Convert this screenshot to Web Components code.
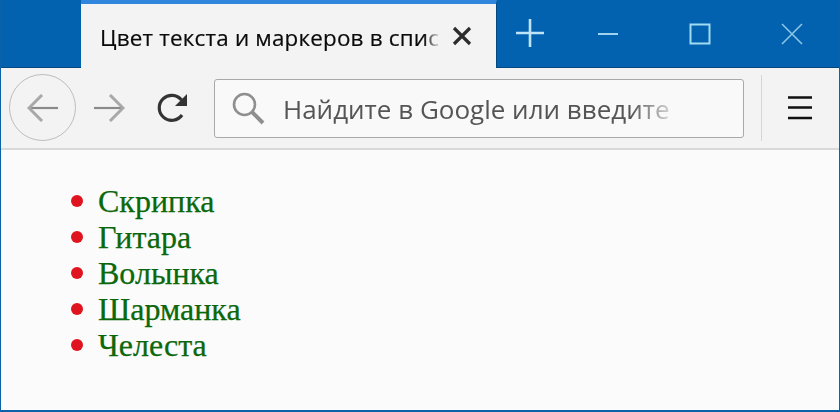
<!DOCTYPE html>
<html lang="ru">
<head>
<meta charset="utf-8">
<title>Цвет текста и маркеров в списке</title>
<style>
    html, body { margin: 0; padding: 0; background: #fbfbfb; }
</style>
</head>
<body>
<browser-window>
    <tab-strip slot="tabs" title="Цвет текста и маркеров в спис"></tab-strip>
    <nav-toolbar slot="toolbar" placeholder="Найдите в Google или введите"></nav-toolbar>
    <color-list>
        <li>Скрипка</li>
        <li>Гитара</li>
        <li>Волынка</li>
        <li>Шарманка</li>
        <li>Челеста</li>
    </color-list>
</browser-window>

<script>
class BrowserWindow extends HTMLElement {
    constructor() {
        super();
        const shadowRoot = this.attachShadow({ mode: 'open' });
        shadowRoot.innerHTML = `
            <style>
                :host {
                    display: flex;
                    flex-direction: column;
                    width: 840px;
                    height: 412px;
                    box-sizing: border-box;
                    overflow: hidden;
                    background: #fbfbfb;
                    border-left: 1px solid #0b62a8;
                    border-right: 1px solid #0b62a8;
                    border-bottom: 2px solid #0b62a8;
                }
                .content { flex: 1; min-height: 0; }
            </style>
            <slot name="tabs"></slot>
            <slot name="toolbar"></slot>
            <div class="content"><slot></slot></div>
        `;
    }
}

class TabStrip extends HTMLElement {
    constructor() {
        super();
        const shadowRoot = this.attachShadow({ mode: 'open' });
        shadowRoot.innerHTML = `
            <style>
                :host {
                    display: flex;
                    align-items: stretch;
                    height: 68px;
                    margin: 0 -1px;
                    padding-left: 81px;
                    box-sizing: border-box;
                    background: #0262b0;
                    border-bottom: 1px solid #03487f;
                }
                .tab {
                    display: flex;
                    align-items: center;
                    width: 416px;
                    height: 68px;
                    box-sizing: border-box;
                    padding: 0 24px 0 19px;
                    background: #f3f3f3;
                    border-top: 4px solid #2f86dc;
                    border-right: 1px solid #03487f;
                    flex: none;
                }
                .title {
                    flex: 1;
                    min-width: 0;
                    overflow: hidden;
                    white-space: nowrap;
                    padding: 2px 0 0 0;
                    font: 22.4px "Open Sans", "Noto Sans", sans-serif;
                    letter-spacing: 0.2px;
                    color: #0a0a0a;
                    -webkit-text-stroke: 0.2px #0a0a0a;
                    -webkit-mask-image: linear-gradient(to right, #000 95%, transparent);
                    mask-image: linear-gradient(to right, #000 95%, transparent);
                }
                svg { display: block; flex: none; }
                .close { margin-left: 11px; }
                .new-tab { margin: 18px 0 0 18px; }
                .controls {
                    display: flex;
                    margin-left: auto;
                    padding-right: 2px;
                }
                .control {
                    display: flex;
                    align-items: center;
                    justify-content: center;
                    width: 92px;
                    height: 68px;
                }
            </style>
            <div class="tab">
                <span class="title"></span>
                <svg class="close" width="20" height="20" viewBox="0 0 20 20">
                    <path d="M2 2 L18 18 M18 2 L2 18" stroke="#2d2d2d" stroke-width="3.2" fill="none"/>
                </svg>
            </div>
            <svg class="new-tab" width="30" height="30" viewBox="0 0 30 30">
                <path d="M15 1 V29 M1 15 H29" stroke="#bfe4f6" stroke-width="2.6" fill="none"/>
            </svg>
            <div class="controls">
                <div class="control">
                    <svg width="22" height="22" viewBox="0 0 22 22"><path d="M1 11 H21" stroke="#9fd3ee" stroke-width="2" fill="none"/></svg>
                </div>
                <div class="control">
                    <svg width="22" height="22" viewBox="0 0 22 22"><rect x="1.5" y="1.5" width="19" height="19" stroke="#9fdcf0" stroke-width="2" fill="none"/></svg>
                </div>
                <div class="control">
                    <svg width="22" height="22" viewBox="0 0 22 22"><path d="M1 1 L21 21 M21 1 L1 21" stroke="#8cc6e6" stroke-width="1.6" fill="none"/></svg>
                </div>
            </div>
        `;
    }

    connectedCallback() {
        this.shadowRoot.querySelector('.title').textContent = this.getAttribute('title') || '';
    }
}

class NavToolbar extends HTMLElement {
    constructor() {
        super();
        const shadowRoot = this.attachShadow({ mode: 'open' });
        shadowRoot.innerHTML = `
            <style>
                :host {
                    display: flex;
                    align-items: center;
                    height: 82px;
                    box-sizing: border-box;
                    padding: 0 0 1px 8px;
                    background: #f3f3f3;
                    border-bottom: 2px solid #d9d9d9;
                }
                svg { display: block; flex: none; }
                .back {
                    display: flex;
                    align-items: center;
                    justify-content: center;
                    width: 67px;
                    height: 67px;
                    box-sizing: border-box;
                    border: 1px solid #bdbdbd;
                    border-radius: 50%;
                    flex: none;
                }
                .forward { margin-left: 17px; }
                .reload { margin-left: 32px; }
                .address {
                    display: flex;
                    align-items: center;
                    width: 530px;
                    height: 59px;
                    box-sizing: border-box;
                    margin: 1px 0 0 25px;
                    padding-left: 17px;
                    background: #f9f9f9;
                    border: 1px solid #a9a9a9;
                    border-radius: 3px;
                    flex: none;
                }
                .placeholder {
                    width: 386px;
                    margin-left: 18px;
                    padding-top: 2px;
                    overflow: hidden;
                    white-space: nowrap;
                    font: 26px "Open Sans", "Noto Sans", sans-serif;
                    color: #555;
                    -webkit-mask-image: linear-gradient(to right, #000 90%, rgba(0,0,0,0.25));
                    mask-image: linear-gradient(to right, #000 90%, rgba(0,0,0,0.25));
                }
                .divider {
                    width: 1px;
                    height: 66px;
                    margin-left: 17px;
                    background: #d5d5d5;
                    flex: none;
                }
                .menu { margin-left: 26px; }
            </style>
            <div class="back">
                <svg width="32" height="28" viewBox="0 0 32 28">
                    <path d="M31 14 H3" stroke="#8a8a8a" stroke-width="2.2" fill="none"/>
                    <path d="M15 1 L2 14 L15 27" stroke="#a8a8a8" stroke-width="3" fill="none"/>
                </svg>
            </div>
            <svg class="forward" width="32" height="28" viewBox="0 0 32 28">
                <path d="M1 14 H29" stroke="#8a8a8a" stroke-width="2.2" fill="none"/>
                <path d="M17 1 L30 14 L17 27" stroke="#a8a8a8" stroke-width="3" fill="none"/>
            </svg>
            <svg class="reload" width="32" height="32" viewBox="0 0 32 32">
                <path d="M25 23 A12.5 12.5 0 1 1 24.5 8" stroke="#333" stroke-width="3.2" fill="none"/>
                <path d="M30 2 V14 H18 Z" fill="#333"/>
            </svg>
            <div class="address">
                <svg width="33" height="33" viewBox="0 0 33 33">
                    <circle cx="12.5" cy="12.5" r="10.5" stroke="#8f8f8f" stroke-width="2.6" fill="none"/>
                    <path d="M20 20 L31 31" stroke="#8f8f8f" stroke-width="4" fill="none"/>
                </svg>
                <span class="placeholder"></span>
            </div>
            <div class="divider"></div>
            <svg class="menu" width="24" height="24" viewBox="0 0 24 24">
                <path d="M0 1.5 H24 M0 11.5 H24 M0 22 H24" stroke="#111" stroke-width="2.6" fill="none"/>
            </svg>
        `;
    }

    connectedCallback() {
        this.shadowRoot.querySelector('.placeholder').textContent = this.getAttribute('placeholder') || '';
    }
}

class ColorList extends HTMLElement {
    constructor() {
        super();
        const shadowRoot = this.attachShadow({ mode: 'open' });
        shadowRoot.innerHTML = `
            <style>
                :host {
                    display: block;
                    padding: 33px 0 0 70px;
                }
                ::slotted(li) {
                    display: flex;
                    align-items: center;
                    gap: 15px;
                    height: 36px;
                    font: 32px/36px "Liberation Serif", "Times New Roman", serif;
                    color: #0a6a0a;
                    -webkit-text-stroke: 0.25px #0a5a0a;
                }
                ::slotted(li)::before {
                    content: "";
                    flex: none;
                    width: 12px;
                    height: 12px;
                    margin-bottom: 1px;
                    border-radius: 50%;
                    background: #e0141e;
                }
            </style>
            <slot></slot>
        `;
    }
}

customElements.define('browser-window', BrowserWindow);
customElements.define('tab-strip', TabStrip);
customElements.define('nav-toolbar', NavToolbar);
customElements.define('color-list', ColorList);
</script>
</body>
</html>
